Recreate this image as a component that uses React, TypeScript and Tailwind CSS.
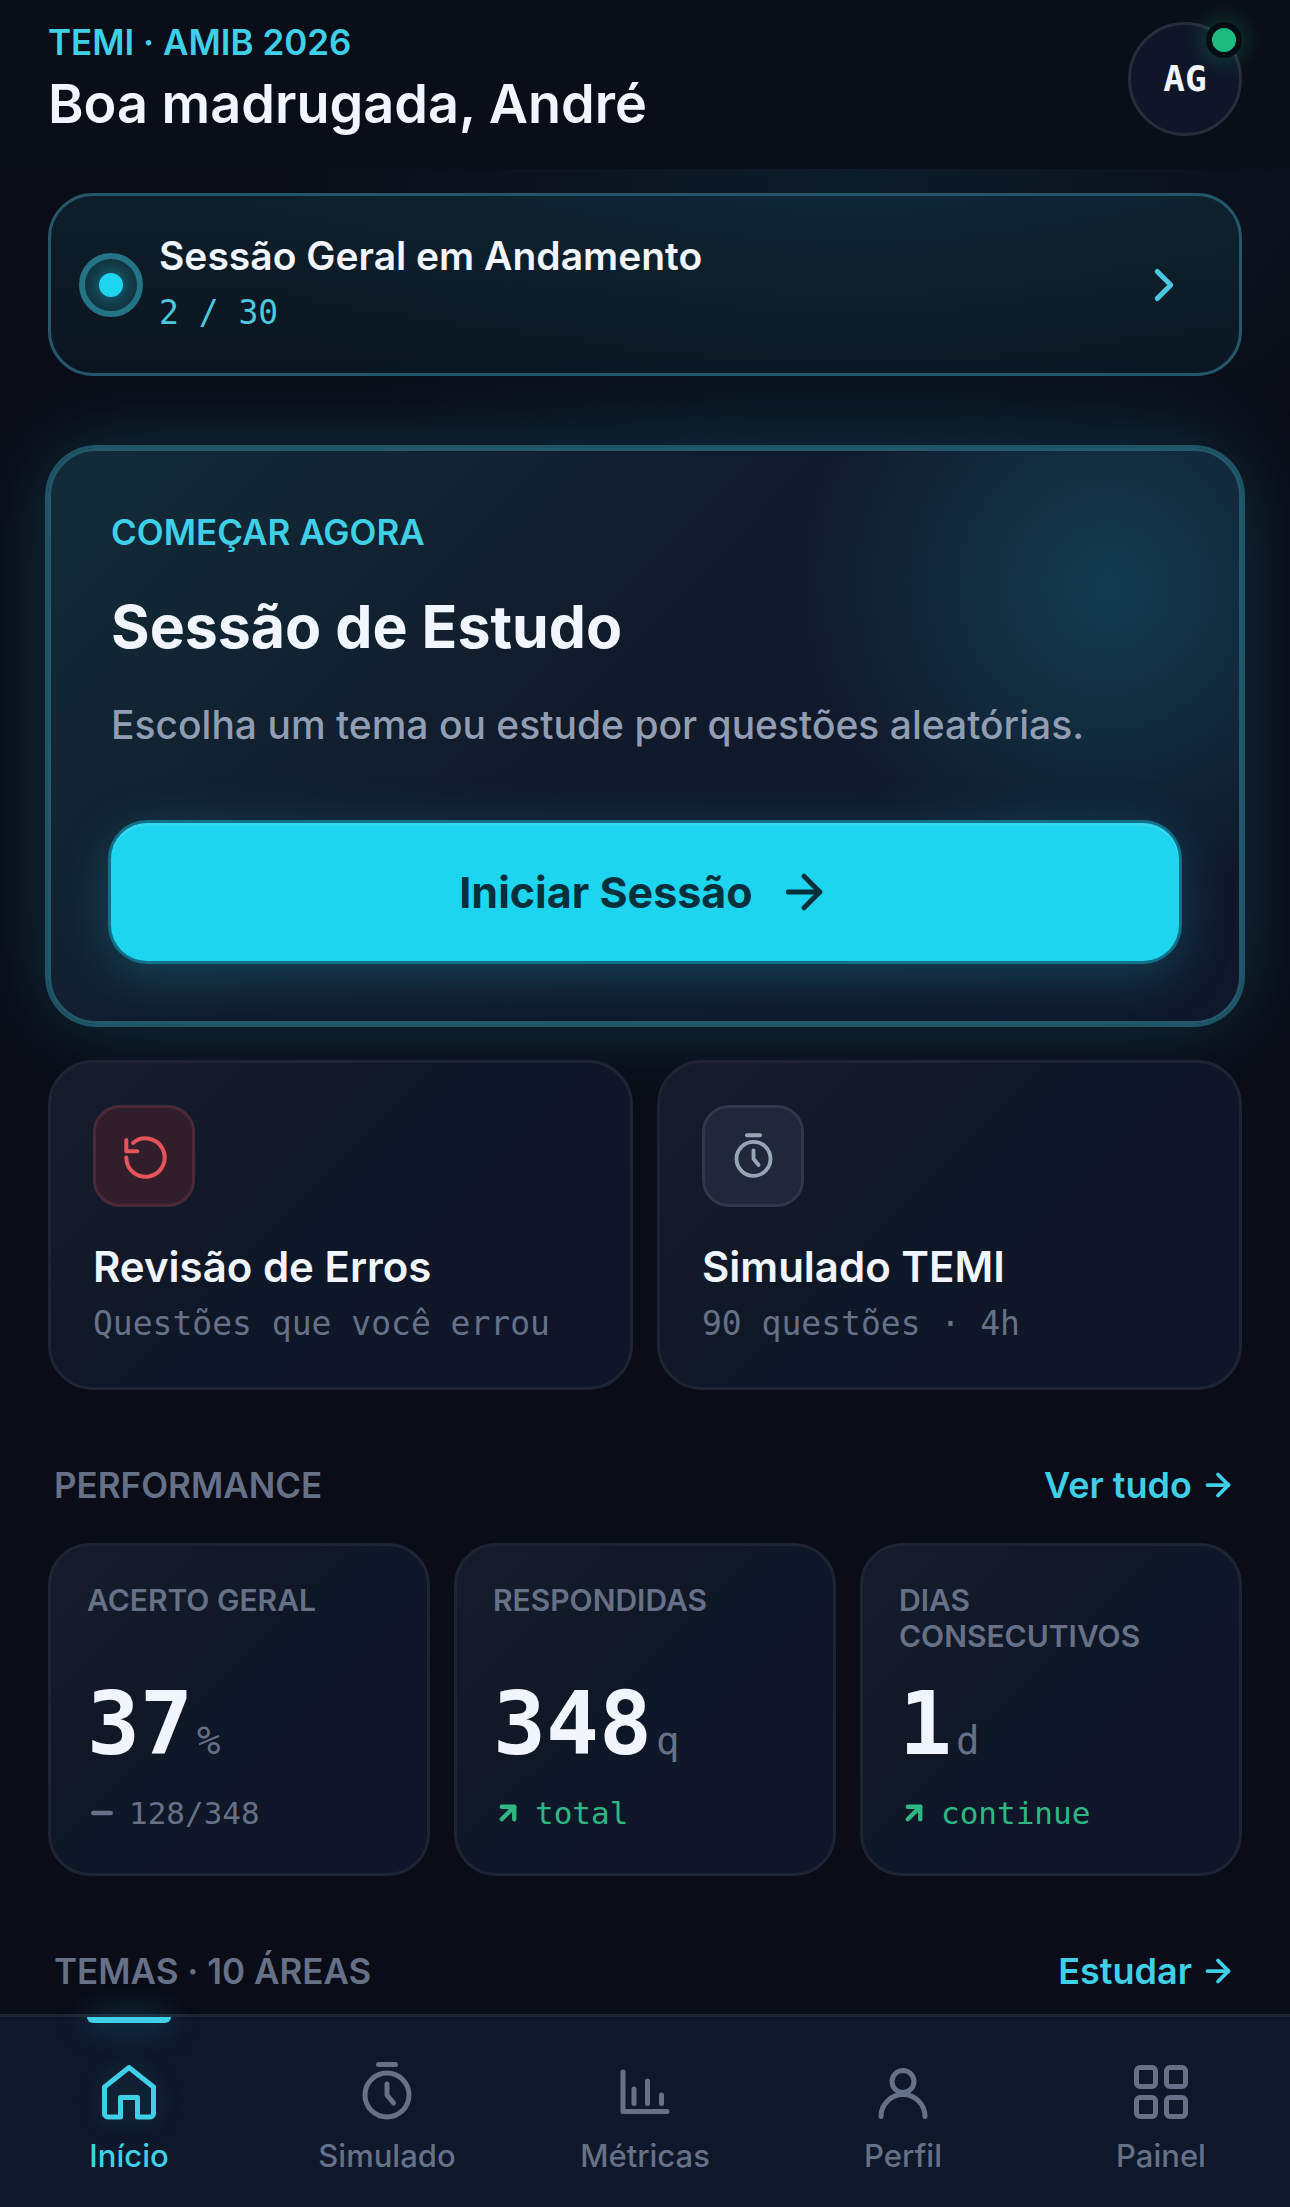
import type { ReactNode } from "react";
import { ArrowRight, ArrowUpRight, ChevronRight, Minus } from "lucide-react";

interface IconProps {
  className?: string;
  strokeWidth?: number;
}

// Shared wrapper for the hand drawn icons
const Icon = ({
  className = "size-[66px]",
  strokeWidth = 5,
  children,
}: IconProps & { children: ReactNode }) => (
  <svg
    viewBox="0 0 66 66"
    fill="none"
    stroke="currentColor"
    strokeWidth={strokeWidth}
    strokeLinecap="round"
    strokeLinejoin="round"
    className={className}
    aria-hidden="true"
  >
    {children}
  </svg>
);

const HomeIcon = () => (
  <Icon className="size-[66px] drop-shadow-[0_0_12px_rgba(34,211,238,0.2)]">
    <path d="M8.5 28 33 8.5 57.5 28V54.5a3.5 3.5 0 0 1-3.5 3.500H41.500V38.500h-17V58H12a3.500 3.500 0 0 1-3.500-3.500Z" />
  </Icon>
);

const StopwatchIcon = ({ className, strokeWidth }: IconProps) => (
  <Icon className={className} strokeWidth={strokeWidth}>
    <path d="M24.5 5.5h17" />
    <circle cx="33" cy="36" r="22" />
    <path d="M33 25v11l6.5 8" />
  </Icon>
);

const ChartIcon = () => (
  <Icon>
    <path d="M11 13v39.5h44M22 30v14.5M35.5 22v22.5M49.5 36v8.5" />
  </Icon>
);

const UserIcon = () => (
  <Icon>
    <circle cx="33" cy="22.5" r="11" />
    <path d="M11 57.5a22 22 0 0 1 44 0" />
  </Icon>
);

const GridIcon = () => (
  <Icon>
    <rect x="8.5" y="8.5" width="19" height="19" rx="3.5" />
    <rect x="38.5" y="8.5" width="19" height="19" rx="3.5" />
    <rect x="8.5" y="38.5" width="19" height="19" rx="3.5" />
    <rect x="38.5" y="38.5" width="19" height="19" rx="3.5" />
  </Icon>
);

const RetryIcon = () => (
  <svg
    viewBox="0 0 54 54"
    fill="none"
    stroke="currentColor"
    strokeWidth="4"
    strokeLinecap="round"
    strokeLinejoin="round"
    className="size-[54px]"
    aria-hidden="true"
  >
    <path d="M9.3 11v11.2h11" />
    <path d="M9.3 28.5A19.2 19.2 0 1 0 16 14" />
  </svg>
);

const mono = "font-['DejaVu_Sans_Mono',monospace]";

const actions = [
  {
    title: "Revisão de Erros",
    text: "Questões que você errou",
    icon: <RetryIcon />,
    box: "border-[#4b2a38] bg-[#321e2b] text-[#e5545a]",
  },
  {
    title: "Simulado TEMI",
    text: "90 questões · 4h",
    icon: <StopwatchIcon className="size-[51px]" />,
    box: "border-[#30384a] bg-[#202738] text-[#98a4b8]",
  },
];

const stats = [
  { label: "Acerto geral", value: "37", unit: "%", note: "128/348", up: false },
  { label: "Respondidas", value: "348", unit: "q", note: "total", up: true },
  { label: "Dias consecutivos", value: "1", unit: "d", note: "continue", up: true },
];

const tabs = [
  { label: "Início", icon: <HomeIcon />, active: true },
  { label: "Simulado", icon: <StopwatchIcon />, active: false },
  { label: "Métricas", icon: <ChartIcon />, active: false },
  { label: "Perfil", icon: <UserIcon />, active: false },
  { label: "Painel", icon: <GridIcon />, active: false },
];

const SectionHeader = ({ title, link }: { title: string; link: string }) => (
  <div className="mt-[71px] flex items-center justify-between px-[6px] leading-[48px]">
    <h2 className="text-[35px] font-semibold text-[#667187] uppercase">{title}</h2>
    <a href="#" className="flex items-center gap-2 text-[36px] font-semibold text-[#3fcfe6]">
      {link}
      <ArrowRight size={36} strokeWidth={2.5} />
    </a>
  </div>
);

const App = () => {
  return (
    <div className="flex min-h-screen flex-col bg-[#0a0c17] font-['Inter',sans-serif] text-[#f1f5fd]">
      <header className="flex items-center justify-between bg-[#0a0e19] px-12 pt-[18px] pb-[29px]">
        <div>
          <p className="text-[35px] leading-[48px] font-semibold text-[#3fcfe6]">
            TEMI · AMIB 2026
          </p>
          <h1 className="mt-[2px] text-[54px] leading-[72px] font-semibold">
            Boa madrugada, André
          </h1>
        </div>
        <button
          type="button"
          className={`relative flex size-[114px] items-center justify-center rounded-full border-[3px] border-[#272d3b] bg-[#0f1628] text-[36px] font-bold ${mono}`}
        >
          AG
          <span className="absolute -top-[3px] -right-[3px] size-9 rounded-full border-[6px] border-[#040d14] bg-[#1fba80] shadow-[0_0_24px_rgba(31,186,128,0.4)]" />
        </button>
      </header>

      <main className="flex flex-col bg-[radial-gradient(ellipse_620px_360px_at_66%_0px,rgba(20,90,110,0.2),transparent)] px-12 pt-6 pb-[18px]">
        {/* Session in progress */}
        <a
          href="#"
          className="flex items-center gap-4 rounded-[45px] border-[3px] border-[#25566a] bg-[linear-gradient(180deg,rgba(16,50,62,0.5),rgba(12,32,44,0.45))] py-[33px] pr-12 pl-7"
        >
          <span className="flex size-16 items-center justify-center rounded-full border-[6px] border-[#247486] bg-[#123440]">
            <span className="size-6 rounded-full bg-[#1ed5f0] shadow-[0_0_16px_rgba(34,211,238,0.5)]" />
          </span>
          <span className="flex flex-1 flex-col gap-[3px] leading-[54px]">
            <span className="text-[39px] font-semibold">Sessão Geral em Andamento</span>
            <span className={`text-[33px] text-[#4cc9de] ${mono}`}>2 / 30</span>
          </span>
          <ChevronRight size={54} strokeWidth={2.25} className="text-[#4cc9e0]" />
        </a>

        {/* Start session */}
        <section className="mt-[72px] rounded-[48px] border-[3px] border-[#23586b] bg-[radial-gradient(circle_310px_at_89%_24%,rgba(22,95,115,0.5),transparent),linear-gradient(135deg,#122c38_0%,#111a2b_45%,#0f172a_100%)] p-[60px] shadow-[0_0_0_3px_#1d5466,0_0_90px_rgba(34,211,238,0.2)]">
          <p className="text-[35px] leading-[42px] font-semibold text-[#3fcfe6]">
            COMEÇAR AGORA
          </p>
          <h2 className="mt-[38px] text-[59px] leading-[72px] font-bold">Sessão de Estudo</h2>
          <p className="mt-8 text-[39px] leading-[60px] font-medium text-[#919db2]">
            Escolha um tema ou estude por questões aleatórias.
          </p>
          <button
            type="button"
            className="mt-[68px] flex w-full items-center justify-center gap-6 rounded-[36px] bg-[#1ed5f0] py-[39px] text-[43px] leading-[60px] font-bold text-[#04303b] shadow-[0_0_0_3px_#12718a,0_12px_54px_rgba(34,211,238,0.25),inset_0_3px_0_rgba(255,255,255,0.1)]"
          >
            Iniciar Sessão
            <ArrowRight size={54} strokeWidth={2.25} />
          </button>
        </section>

        {/* Quick actions */}
        <div className="mt-9 grid grid-cols-2 gap-6">
          {actions.map((action) => (
            <a
              key={action.title}
              href="#"
              className="rounded-[45px] border-[3px] border-[#1e2433] bg-[linear-gradient(135deg,#161c2b_0%,#0e1727_50%,#10152a_100%)] p-[42px]"
            >
              <span
                className={`flex size-[102px] items-center justify-center rounded-[27px] border-[3px] ${action.box}`}
              >
                {action.icon}
              </span>
              <h3 className="mt-[33px] text-[42px] leading-[54px] font-semibold">
                {action.title}
              </h3>
              <p className={`mt-[9px] text-[33px] leading-[42px] text-[#667187] ${mono}`}>
                {action.text}
              </p>
            </a>
          ))}
        </div>

        <SectionHeader title="Performance" link="Ver tudo" />
        <div className="mt-[34px] grid grid-cols-3 gap-6">
          {stats.map((stat) => (
            <div
              key={stat.label}
              className="flex flex-col rounded-[42px] border-[3px] border-[#1e2433] bg-[linear-gradient(135deg,#161c2b_0%,#0e1727_50%,#10152a_100%)] p-9"
            >
              <h3 className="text-[30px] leading-[36px] font-semibold text-[#667187] uppercase">
                {stat.label}
              </h3>
              <p className={`mt-auto flex items-baseline gap-1 pt-[25px] ${mono}`}>
                <span className="text-[88px] leading-[90px] font-bold">{stat.value}</span>
                <span className="text-[39px] leading-[42px] text-[#667187]">{stat.unit}</span>
              </p>
              <p
                className={`mt-5 flex items-center gap-3 text-[31px] leading-[48px] ${mono} ${
                  stat.up ? "text-[#2fb783]" : "text-[#667187]"
                }`}
              >
                {stat.up ? (
                  <ArrowUpRight size={30} strokeWidth={3.5} />
                ) : (
                  <Minus size={30} strokeWidth={3.5} />
                )}
                {stat.note}
              </p>
            </div>
          ))}
        </div>

        <SectionHeader title="Temas · 10 áreas" link="Estudar" />
      </main>

      {/* Bottom navigation */}
      <nav className="sticky bottom-0 mt-auto grid grid-cols-5 border-t-[3px] border-[#1f2432] bg-[#0f172a]">
        {tabs.map((tab) => (
          <a
            key={tab.label}
            href="#"
            className={`relative flex flex-col items-center gap-[13px] pt-[42px] pb-[33px] text-[31px] leading-[36px] font-medium ${
              tab.active ? "text-[#3fcfe6]" : "text-[#667187]"
            }`}
          >
            {tab.active && (
              <span className="absolute top-0 h-[6px] w-[84px] rounded-b-[6px] bg-[#3fd0ea] shadow-[0_0_30px_rgba(34,211,238,0.6)]" />
            )}
            {tab.icon}
            {tab.label}
          </a>
        ))}
      </nav>
    </div>
  );
};

export default App;
